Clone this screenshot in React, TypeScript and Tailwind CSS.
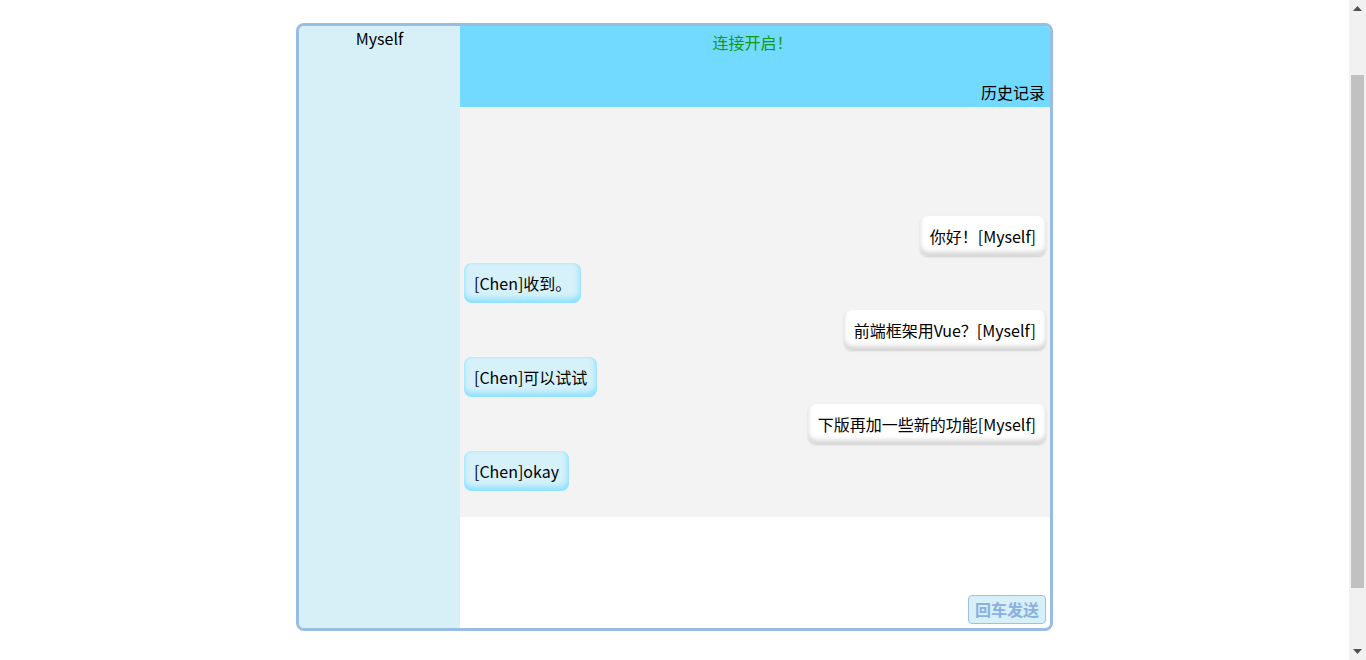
type Msg = { from: "me" | "chen"; text: string };

const messages: Msg[] = [
  { from: "me", text: "你好！[Myself]" },
  { from: "chen", text: "[Chen]收到。" },
  { from: "me", text: "前端框架用Vue？[Myself]" },
  { from: "chen", text: "[Chen]可以试试" },
  { from: "me", text: "下版再加一些新的功能[Myself]" },
  { from: "chen", text: "[Chen]okay" },
];

function Bubble({ msg }: { msg: Msg }) {
  if (msg.from === "me") {
    return (
      <div className="flex justify-end">
        <div className="rounded-lg bg-white px-[10px] py-2 leading-6 shadow-[inset_0_-4px_5px_#d6d6d6,0_1px_2px_#d0d0d0]">
          {msg.text}
        </div>
      </div>
    );
  }
  return (
    <div className="flex justify-start">
      <div className="rounded-lg bg-[#d6f1fa] px-[10px] py-2 leading-6 shadow-[inset_-1px_-4px_6px_#88dfff,inset_0_0_3px_#a0e6ff]">
        {msg.text}
      </div>
    </div>
  );
}

// fake page scrollbar, the page is scrolled a bit down in the shot
function ScrollBar() {
  return (
    <div className="flex w-[17px] shrink-0 flex-col items-center bg-[#f1f1f1]">
      <div className="flex h-[17px] items-center justify-center">
        <svg width="9" height="5" viewBox="0 0 9 5">
          <path d="M0 5 L4.5 0 L9 5 Z" fill="#505050" />
        </svg>
      </div>
      <div className="h-[58px]" />
      <div className="h-[513px] w-[13px] bg-[#c1c1c1]" />
      <div className="flex-1" />
      <div className="flex h-[17px] items-center justify-center">
        <svg width="9" height="5" viewBox="0 0 9 5">
          <path d="M0 0 L4.5 5 L9 0 Z" fill="#505050" />
        </svg>
      </div>
    </div>
  );
}

export default function App() {
  return (
    <div
      className="flex h-[660px] overflow-hidden bg-white"
      style={{ fontFamily: '"Noto Sans CJK SC", "Noto Sans", sans-serif' }}
    >
      <div className="flex-1 pt-[23px]">
        <div className="mx-auto flex h-[608px] w-[757px] overflow-hidden rounded-lg border-[3px] border-[#99bde2] text-base text-black">
          {/* sidebar */}
          <div className="w-[161px] shrink-0 bg-[#d7f0f8] text-center leading-6">
            Myself
          </div>

          {/* main */}
          <div className="flex flex-1 flex-col">
            <div className="flex h-[81px] flex-col justify-between bg-[#72d9ff] pb-[3px] pr-[5px]">
              <div className="pt-1 text-center leading-6 text-[#119911]">
                连接开启！
              </div>
              <div className="text-right leading-6">历史记录</div>
            </div>

            <div className="flex h-[410px] flex-col justify-end gap-[7px] bg-[#f3f3f3] px-1 pb-[26px]">
              {messages.map((m, i) => (
                <Bubble key={i} msg={m} />
              ))}
            </div>

            <div className="flex flex-1 items-end justify-end bg-white p-1">
              <button className="rounded border border-[#9cc0e6] bg-[#d7f0f8] px-[6px] text-base font-bold leading-[27px] text-[#8aafe0]">
                回车发送
              </button>
            </div>
          </div>
        </div>
      </div>
      <ScrollBar />
    </div>
  );
}
